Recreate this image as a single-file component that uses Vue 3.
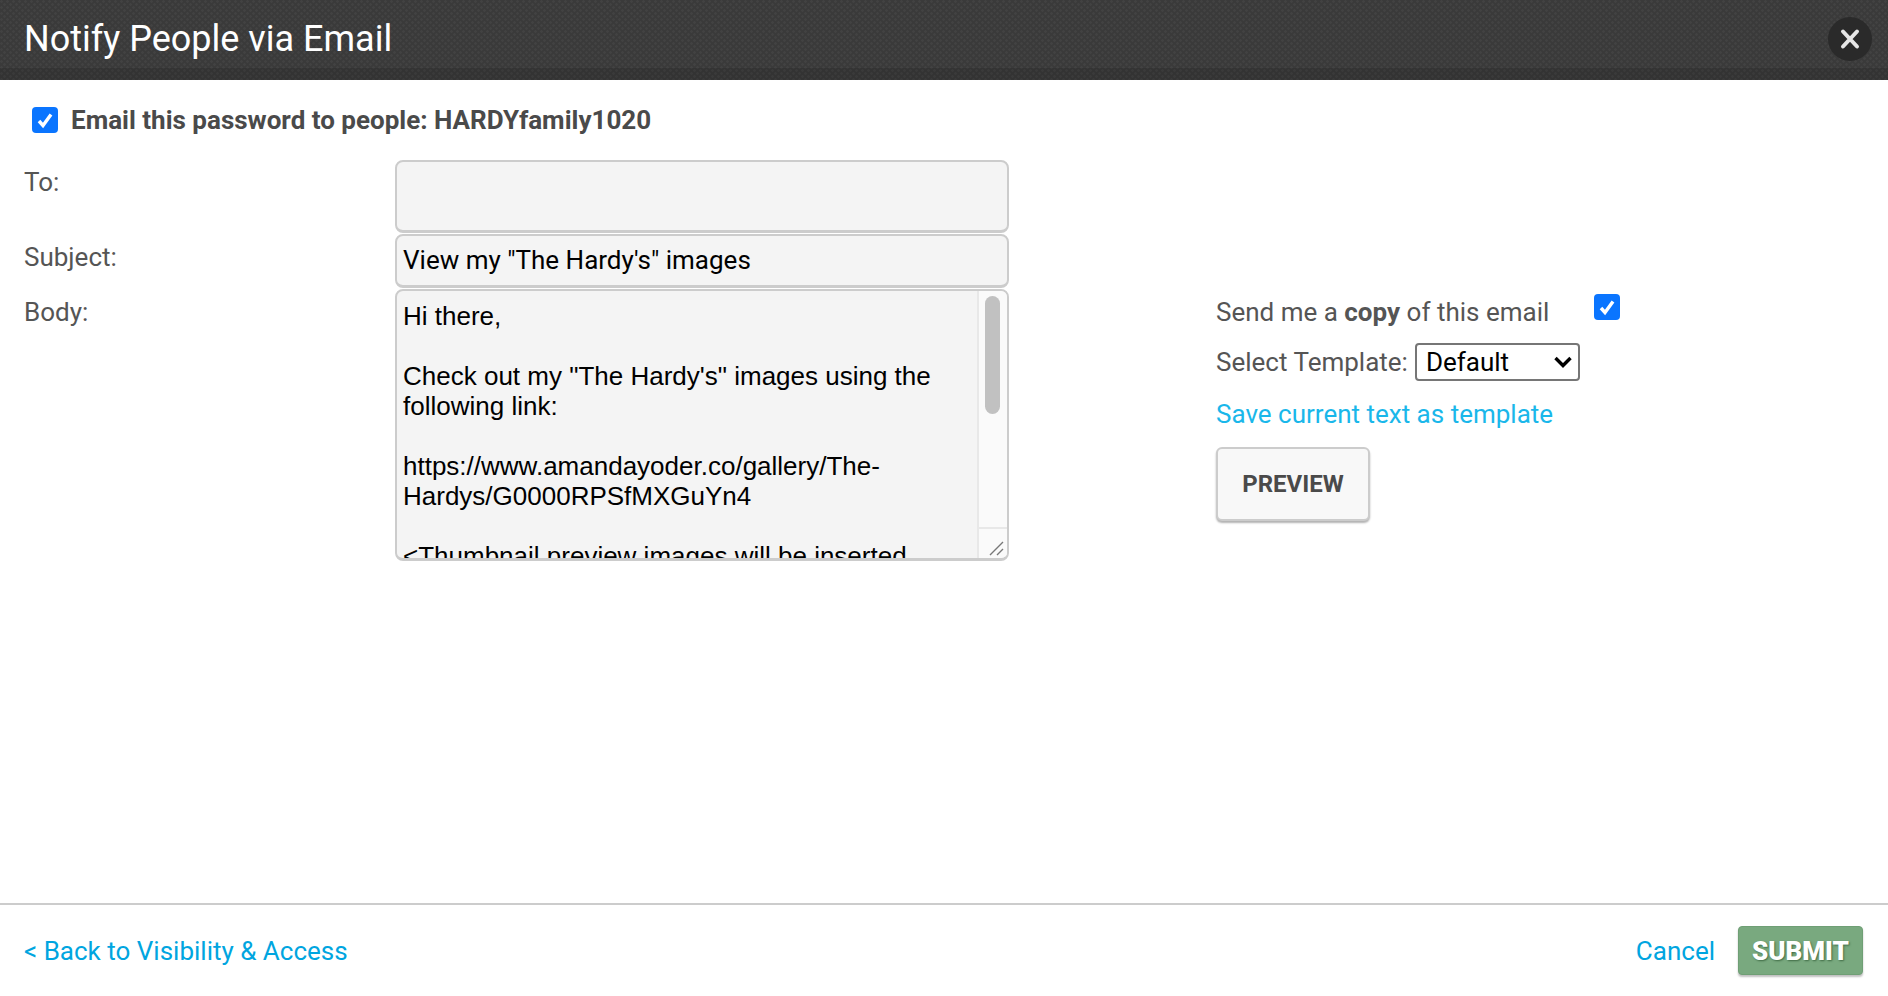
<script setup>
const bodyLines = [
  'Hi there,',
  '',
  'Check out my "The Hardy\'s" images using the',
  'following link:',
  '',
  'https://www.amandayoder.co/gallery/The-',
  'Hardys/G0000RPSfMXGuYn4',
  '',
  '<Thumbnail preview images will be inserted'
]
</script>

<template>
  <div class="dialog">
    <header class="head">
      <h1>Notify People via Email</h1>
      <button class="close" aria-label="Close">
        <svg width="24" height="24" viewBox="0 0 24 24">
          <path d="M5 4.5 L19 19.5 M19 4.5 L5 19.5" stroke="#e6e6e6" stroke-width="4" stroke-linecap="round" fill="none" />
        </svg>
      </button>
    </header>

    <main class="content">
      <label class="notify">
        <span class="check">
          <svg width="18" height="18" viewBox="0 0 18 18"><path d="M3 10 L7 14.5 L15 3.5" stroke="#fff" stroke-width="3.4" fill="none" /></svg>
        </span>
        <span>Email this password to people: HARDYfamily1020</span>
      </label>

      <div class="columns">
        <div class="form">
          <label class="lbl lbl-to">To:</label>
          <div class="field to"></div>
          <label class="lbl lbl-subject">Subject:</label>
          <div class="field subject">View my "The Hardy's" images</div>
          <label class="lbl lbl-body">Body:</label>
          <div class="field body">
            <div class="body-text">
              <div v-for="(line, i) in bodyLines" :key="i" class="line">{{ line }}</div>
            </div>
            <div class="scroll">
              <div class="thumb"></div>
              <div class="corner">
                <svg width="22" height="22" viewBox="0 0 22 22">
                  <path d="M5 19 L18 6 M12 19 L18 13" stroke="#777" stroke-width="1.4" fill="none" />
                </svg>
              </div>
            </div>
          </div>
        </div>

        <aside class="side">
          <div class="copy">
            <span>Send me a <b>copy</b> of this email</span>
            <span class="check">
              <svg width="18" height="18" viewBox="0 0 18 18"><path d="M3 10 L7 14.5 L15 3.5" stroke="#fff" stroke-width="3.4" fill="none" /></svg>
            </span>
          </div>
          <div class="template">
            <span>Select Template:</span>
            <div class="select">
              <span>Default</span>
              <svg width="20" height="14" viewBox="0 0 20 14"><path d="M2.5 3 L10 10.5 L17.5 3" stroke="#000" stroke-width="3.4" fill="none" /></svg>
            </div>
          </div>
          <a class="save">Save current text as template</a>
          <button class="preview">PREVIEW</button>
        </aside>
      </div>
    </main>

    <footer class="foot">
      <a class="link">&lt; Back to Visibility &amp; Access</a>
      <div class="actions">
        <a class="link">Cancel</a>
        <button class="submit">SUBMIT</button>
      </div>
    </footer>
  </div>
</template>

<style>
html, body {
  margin: 0;
  background: #fff;
}
</style>

<style scoped>
.dialog {
  width: 1888px;
  height: 996px;
  display: flex;
  flex-direction: column;
  font-family: Roboto, "Liberation Sans", sans-serif;
  color: #555;
  overflow: hidden;
}
.head {
  height: 80px;
  box-sizing: border-box;
  display: flex;
  align-items: center;
  justify-content: space-between;
  padding: 0 16px 2px 24px;
  background-color: #3a3a3a;
  background-image:
    linear-gradient(to bottom, transparent 68px, rgba(0, 0, 0, 0.12) 68px),
    radial-gradient(circle at 25% 25%, rgba(255, 255, 255, 0.045) 1px, transparent 1.6px),
    radial-gradient(circle at 75% 75%, rgba(255, 255, 255, 0.045) 1px, transparent 1.6px);
  background-size: auto, 6px 6px, 6px 6px;
}
.head h1 {
  margin: 0;
  font-size: 36px;
  font-weight: 400;
  color: #fff;
  line-height: 1;
}
.close {
  width: 44px;
  height: 44px;
  padding: 0;
  border: none;
  border-radius: 50%;
  background: #2a2a2a;
  display: flex;
  align-items: center;
  justify-content: center;
  filter: blur(0.5px);
}
.content {
  flex: 1;
  padding: 26px 24px 0;
}
.notify {
  display: flex;
  align-items: center;
  gap: 13px;
  margin-left: 8px;
  font-size: 26px;
  font-weight: 700;
  color: #4a4a4a;
  height: 28px;
}
.check {
  width: 26px;
  height: 26px;
  flex: none;
  border-radius: 4px;
  background: #0a75ff;
  display: flex;
  align-items: center;
  justify-content: center;
}
.columns {
  display: flex;
  margin-top: 26px;
}
.form {
  width: 985px;
  display: grid;
  grid-template-columns: 371px 614px;
  grid-template-rows: 74px 55px 272px;
}
.lbl {
  font-size: 26px;
  line-height: 30px;
}
.lbl-to {
  padding-top: 7px;
}
.lbl-subject {
  padding-top: 8px;
}
.lbl-body {
  padding-top: 8px;
}
.field {
  box-sizing: border-box;
  background: #f4f4f4;
  border: 2px solid #ccc;
  border-bottom-width: 3px;
  border-radius: 8px;
  color: #000;
}
.to {
  height: 73px;
}
.subject {
  height: 54px;
  padding: 0 6px;
  font-size: 26px;
  line-height: 49px;
}
.body {
  height: 272px;
  display: flex;
  overflow: hidden;
}
.body-text {
  flex: 1;
  padding: 10px 6px 0;
  font-family: "Liberation Sans", Arial, sans-serif;
  font-size: 26px;
  line-height: 30px;
  overflow: hidden;
}
.line {
  height: 30px;
  white-space: nowrap;
}
.scroll {
  width: 28px;
  position: relative;
  background: #fafafa;
  border-left: 2px solid #e8e8e8;
}
.thumb {
  position: absolute;
  top: 5px;
  left: 6px;
  width: 15px;
  height: 118px;
  border-radius: 8px;
  background: #c1c1c1;
}
.corner {
  position: absolute;
  left: 0;
  right: 0;
  bottom: 0;
  height: 29px;
  border-top: 2px solid #e8e8e8;
  display: flex;
  align-items: flex-end;
  justify-content: flex-end;
}
.side {
  margin-left: 207px;
  padding-top: 0;
  display: flex;
  flex-direction: column;
  align-items: flex-start;
  font-size: 26px;
  margin-top: 129px;
}
.copy {
  width: 404px;
  height: 53px;
  display: flex;
  justify-content: space-between;
  align-items: flex-start;
  line-height: 30px;
  padding-top: 8px;
  box-sizing: border-box;
}
.copy .check {
  margin-top: -3px;
}
.template {
  display: flex;
  align-items: center;
  gap: 7px;
  height: 38px;
  margin-top: 1px;
}
.select {
  box-sizing: border-box;
  width: 165px;
  height: 38px;
  border: 2px solid #767676;
  border-radius: 4px;
  color: #000;
  display: flex;
  align-items: center;
  justify-content: space-between;
  padding: 0 5px 0 9px;
  background: #fff;
}
.save {
  margin-top: 18px;
  color: #1ab7ea;
  line-height: 30px;
}
.preview {
  margin-top: 18px;
  width: 154px;
  height: 74px;
  box-sizing: border-box;
  border: 2px solid #ccc;
  border-radius: 6px;
  background: #f8f8f8;
  box-shadow: 0 2px 2px rgba(0, 0, 0, 0.3);
  font-family: inherit;
  font-size: 24px;
  font-weight: 700;
  color: #4a4a4a;
  padding: 0;
}
.foot {
  height: 93px;
  box-sizing: border-box;
  border-top: 2px solid #ccc;
  display: flex;
  align-items: center;
  justify-content: space-between;
  padding: 0 25px 0 24px;
  font-size: 26px;
}
.link {
  color: #00a5e0;
}
.actions {
  display: flex;
  align-items: center;
  gap: 23px;
}
.submit {
  width: 125px;
  height: 49px;
  padding: 0;
  border: 1px solid #6f9f75;
  border-radius: 4px;
  background: #79a97f;
  box-shadow: 0 2px 2px rgba(0, 0, 0, 0.25);
  font-family: inherit;
  font-size: 26px;
  font-weight: 900;
  color: #fff;
  text-shadow: 1px 1px 2px #3f6b45;
}
</style>
